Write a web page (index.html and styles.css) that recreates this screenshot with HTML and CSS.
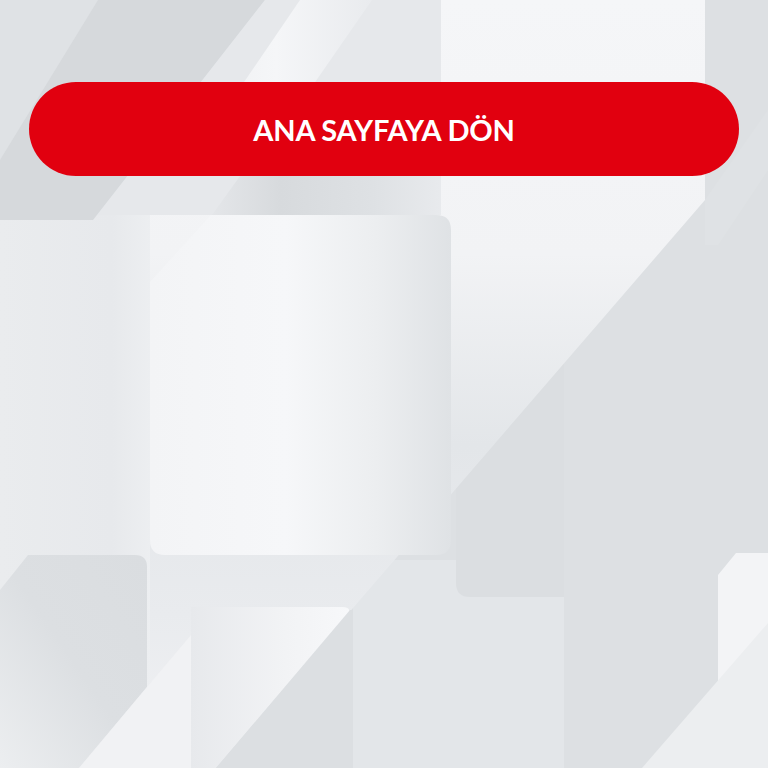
FILE: index.html
```html
<!DOCTYPE html>
<html lang="tr">
<head>
<meta charset="utf-8">
<title>Ana Sayfaya Dön</title>
<link rel="stylesheet" href="styles.css">
</head>
<body>
<div class="stage">
  <svg class="backdrop" viewBox="0 0 768 768" width="768" height="768" aria-hidden="true">
    <defs>
      <linearGradient id="gTopLight" x1="0" y1="0" x2="0" y2="1">
        <stop offset="0" stop-color="#f5f6f8"/>
        <stop offset="0.33" stop-color="#f2f3f5"/>
        <stop offset="0.58" stop-color="#e3e6e9"/>
        <stop offset="0.8" stop-color="#e9ebee"/>
        <stop offset="1" stop-color="#f1f2f4"/>
      </linearGradient>
      <linearGradient id="gBig" x1="0" y1="0" x2="1" y2="0">
        <stop offset="0" stop-color="#f3f4f6"/>
        <stop offset="0.45" stop-color="#f6f7f9"/>
        <stop offset="0.75" stop-color="#eceef0"/>
        <stop offset="1" stop-color="#dfe2e5"/>
      </linearGradient>
      <linearGradient id="gShadow" x1="0" y1="0" x2="1" y2="0">
        <stop offset="0" stop-color="#e4e6e9"/>
        <stop offset="0.3" stop-color="#d7dadd"/>
        <stop offset="0.7" stop-color="#dee1e4"/>
        <stop offset="1" stop-color="#e8eaed"/>
      </linearGradient>
      <linearGradient id="gLeft" x1="0" y1="0" x2="1" y2="0">
        <stop offset="0" stop-color="#eaecee"/>
        <stop offset="0.7" stop-color="#e7e9ec"/>
        <stop offset="1" stop-color="#eef0f2"/>
      </linearGradient>
      <linearGradient id="gBL" x1="1" y1="0" x2="0" y2="1">
        <stop offset="0" stop-color="#dadde0"/>
        <stop offset="0.5" stop-color="#dcdfe2"/>
        <stop offset="1" stop-color="#eceef0"/>
      </linearGradient>
      <linearGradient id="gBM" x1="0" y1="0" x2="1" y2="0">
        <stop offset="0" stop-color="#e7e9ec"/>
        <stop offset="0.6" stop-color="#f2f3f5"/>
        <stop offset="1" stop-color="#f7f8fa"/>
      </linearGradient>
      <linearGradient id="gStripe" x1="0" y1="0" x2="1" y2="0">
        <stop offset="0" stop-color="#eceef0"/>
        <stop offset="0.5" stop-color="#f5f6f8"/>
        <stop offset="1" stop-color="#e9ebee"/>
      </linearGradient>
    </defs>

    <!-- base -->
    <rect width="768" height="768" fill="#dde0e3"/>

    <!-- left column -->
    <rect x="0" y="215" width="160" height="553" fill="url(#gLeft)"/>

    <!-- top-left dark band -->
    <polygon points="0,0 265,0 93,220 0,220" fill="#d6d9dc"/>
    <polygon points="0,0 98,0 0,160" fill="#dfe2e5"/>

    <!-- middle-top band -->
    <polygon points="265,0 441,0 441,215 97,215" fill="#e6e8eb"/>
    <polygon points="300,0 372,0 250,176 180,176" fill="url(#gStripe)"/>
    <polygon points="240,176 441,176 441,215 212,215" fill="url(#gShadow)"/>

    <!-- lighter zone right of diagonal, lower -->
    <rect x="353" y="560" width="211" height="208" fill="#e3e6e9"/>
    <path d="M456,200 L564,200 L564,597 L470,597 Q456,597 456,583 Z" fill="#dbdee1"/>

    <!-- large light region left of the long diagonal -->
    <polygon points="441,0 705,0 705,200 215,768 150,768 150,215 441,215" fill="url(#gTopLight)"/>

    <!-- right strip top details -->
    <polygon points="768,110 768,170 718,245 705,245 705,200" fill="#dfe2e5"/>

    <!-- right light card -->
    <path d="M736,553 L768,553 L768,693 L732,693 Q718,693 718,679 L718,575 Z" fill="#f3f4f6"/>
    <polygon points="768,623 768,768 642,768" fill="#eceef0"/>

    <!-- big center card -->
    <path d="M211,215 L436,215 Q451,215 451,230 L451,540 Q451,555 436,555 L165,555 Q150,555 150,540 L150,282 Z" fill="url(#gBig)"/>

    <!-- bottom left card -->
    <path d="M28,555 L135,555 Q147,555 147,567 L147,687 L79,768 L0,768 L0,590 Z" fill="url(#gBL)"/>
    <polygon points="147,687 191,635 191,768 79,768" fill="#f1f2f4"/>

    <!-- bottom middle card -->
    <path d="M191,607 L342,607 Q352,607 348,614 L216,768 L191,768 Z" fill="url(#gBM)"/>
    <polygon points="350,610 353,610 353,768 216,768" fill="#dcdfe2"/>
  </svg>

  <main class="content">
    <a class="home-btn" href="#">ANA SAYFAYA DÖN</a>
  </main>
</div>
</body>
</html>
```

FILE: styles.css
```css
html, body {
  margin: 0;
  padding: 0;
}

body {
  width: 768px;
  height: 768px;
  overflow: hidden;
  background: #e4e7ea;
  font-family: "Lato", "Open Sans", "Liberation Sans", sans-serif;
}

.stage {
  display: grid;
  width: 768px;
  height: 768px;
}

.backdrop,
.content {
  grid-area: 1 / 1;
}

.backdrop {
  display: block;
}

.content {
  display: flex;
  flex-direction: column;
  padding: 82px 29px 0;
}

.home-btn {
  display: flex;
  align-items: center;
  justify-content: center;
  height: 94px;
  border-radius: 47px;
  background: #e1000f;
  color: #ffffff;
  font-size: 29px;
  font-weight: 700;
  letter-spacing: -0.2px;
  text-decoration: none;
}
```
